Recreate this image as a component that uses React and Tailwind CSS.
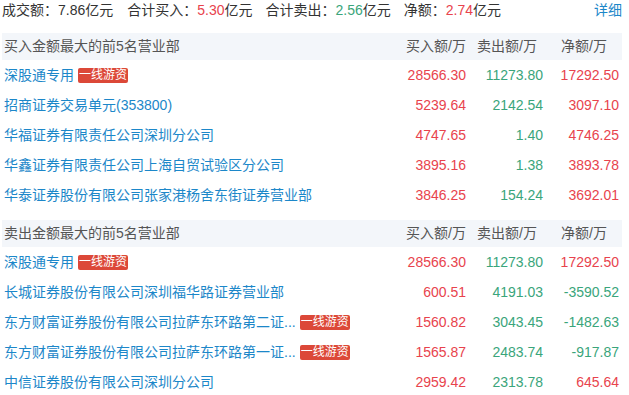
const buyRows = [
  { name: '深股通专用', tag: true, buy: '28566.30', sell: '11273.80', net: '17292.50' },
  { name: '招商证券交易单元(353800)', buy: '5239.64', sell: '2142.54', net: '3097.10' },
  { name: '华福证券有限责任公司深圳分公司', buy: '4747.65', sell: '1.40', net: '4746.25' },
  { name: '华鑫证券有限责任公司上海自贸试验区分公司', buy: '3895.16', sell: '1.38', net: '3893.78' },
  { name: '华泰证券股份有限公司张家港杨舍东街证券营业部', buy: '3846.25', sell: '154.24', net: '3692.01' },
]

const sellRows = [
  { name: '深股通专用', tag: true, buy: '28566.30', sell: '11273.80', net: '17292.50' },
  { name: '长城证券股份有限公司深圳福华路证券营业部', buy: '600.51', sell: '4191.03', net: '-3590.52' },
  { name: '东方财富证券股份有限公司拉萨东环路第二证...', tag: true, buy: '1560.82', sell: '3043.45', net: '-1482.63' },
  { name: '东方财富证券股份有限公司拉萨东环路第一证...', tag: true, buy: '1565.87', sell: '2483.74', net: '-917.87' },
  { name: '中信证券股份有限公司深圳分公司', buy: '2959.42', sell: '2313.78', net: '645.64' },
]

function Tag() {
  return (
    <span className="ml-[4px] shrink-0 h-[15px] px-[1px] rounded-[2px] bg-[#dc4838] text-white text-[12px] leading-[15px]">
      一线游资
    </span>
  )
}

function Section({ title, rows }) {
  return (
    <div>
      {/* 表头 */}
      <div className="h-[27px] flex items-center bg-[#f3f6fa] text-[#555] pl-[2px]">
        <div className="flex-1">{title}</div>
        <div className="w-[80px] text-right">买入额/万</div>
        <div className="w-[77px] text-right pr-[6px]">卖出额/万</div>
        <div className="w-[79px] text-right pr-[15px]">净额/万</div>
      </div>
      {rows.map((r, i) => (
        <div key={i} className="h-[30px] flex items-center pl-[2px]">
          <div className="flex-1 min-w-0 flex items-center">
            <span className="whitespace-nowrap text-[#1c87c9]">{r.name}</span>
            {r.tag && <Tag />}
          </div>
          <div className="w-[80px] text-right text-[#e8434d]">{r.buy}</div>
          <div className="w-[77px] text-right text-[#3aa57b]">{r.sell}</div>
          <div className={`w-[79px] text-right pr-[3px] ${r.net.startsWith('-') ? 'text-[#3aa57b]' : 'text-[#e8434d]'}`}>
            {r.net}
          </div>
        </div>
      ))}
    </div>
  )
}

export default function App() {
  return (
    <div className="w-[629px] h-[395px] bg-white overflow-hidden text-[14px] font-['Liberation_Sans','Noto_Sans_CJK_SC',sans-serif]">
      <div className="pl-[2px] pr-[7px]">
        {/* 汇总 */}
        <div className="h-[20px] flex items-center text-[#333] leading-[20px]">
          <span className="mr-[14px]">成交额：7.86亿元</span>
          <span className="mr-[13px]">合计买入：<span className="text-[#e8434d]">5.30</span>亿元</span>
          <span className="mr-[13px]">合计卖出：<span className="text-[#3aa57b]">2.56</span>亿元</span>
          <span>净额：<span className="text-[#e8434d]">2.74</span>亿元</span>
          <span className="ml-auto text-[#1c87c9]">详细</span>
        </div>
        <div className="mt-[13px]">
          <Section title="买入金额最大的前5名营业部" rows={buyRows} />
        </div>
        <div className="mt-[10px]">
          <Section title="卖出金额最大的前5名营业部" rows={sellRows} />
        </div>
      </div>
    </div>
  )
}
